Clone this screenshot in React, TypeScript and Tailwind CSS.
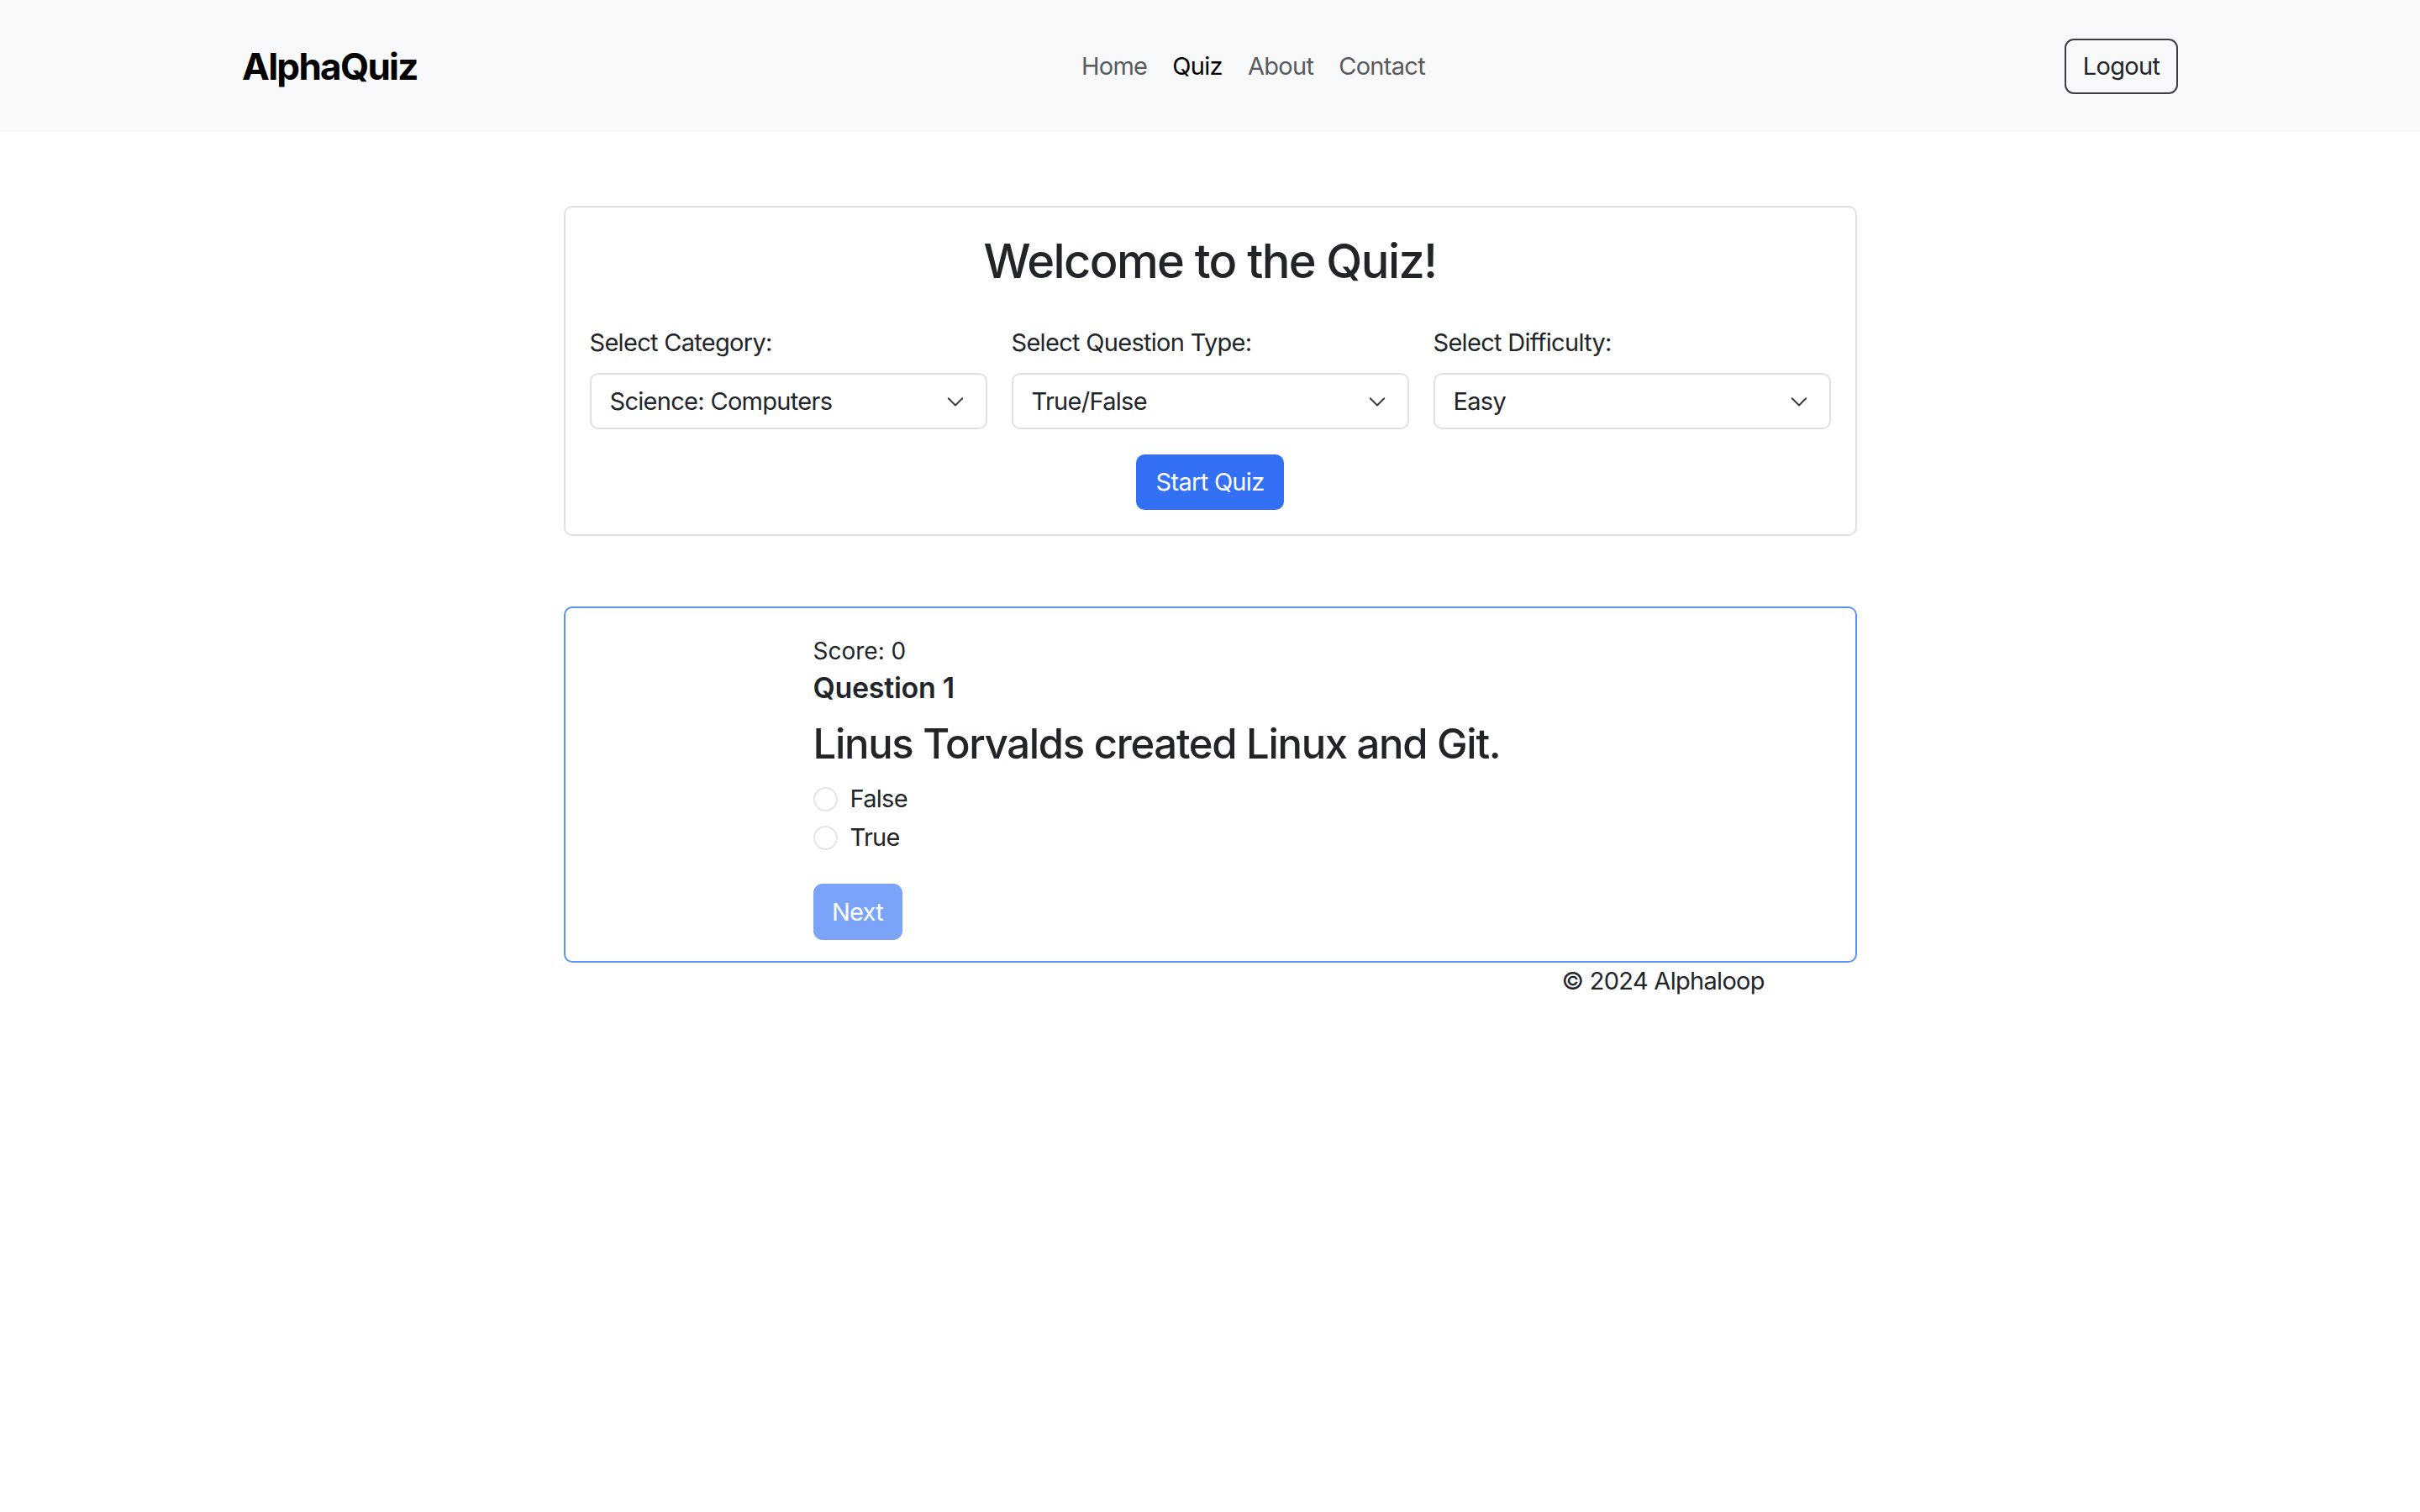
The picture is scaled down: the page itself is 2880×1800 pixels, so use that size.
import React, { useState } from 'react';

const font = "font-['Inter','Liberation_Sans',sans-serif]";

const Chevron = () => (
  <svg width="24" height="24" viewBox="0 0 16 16" fill="none" className="shrink-0">
    <path d="M2.5 5.5l5.5 5.5 5.5-5.5" stroke="#343a40" strokeWidth="1.3" strokeLinecap="round" strokeLinejoin="round" />
  </svg>
);

const FakeSelect: React.FC<{ label: string; value: string }> = ({ label, value }) => (
  <div className="flex flex-col">
    <label className="text-[29px] leading-[44px] tracking-[-0.7px] mb-[14px]">{label}</label>
    <div className="h-[67px] border-2 border-[#dee2e6] rounded-[10px] bg-white flex items-center justify-between pl-[22px] pr-[24px]">
      <span className="text-[29px] leading-[44px] tracking-[-0.7px]">{value}</span>
      <Chevron />
    </div>
  </div>
);

const App: React.FC = () => {
  const [answer, setAnswer] = useState<string | null>(null);
  const links = ['Home', 'Quiz', 'About', 'Contact'];

  return (
    <div className={`min-h-screen bg-white text-[#212529] ${font}`}>
      <nav className="h-[157px] bg-[#f8f9fa] flex items-center px-[288px]">
        <span className="text-[44px] font-bold text-black tracking-[-1.7px] mr-[29px]">AlphaQuiz</span>
        <ul className="mx-auto flex">
          {links.map(l => (
            <li key={l} className={`px-[15px] text-[29px] leading-[44px] tracking-[-0.7px] ${l === 'Quiz' ? 'text-black' : 'text-[#595a5b]'}`}>{l}</li>
          ))}
        </ul>
        <button className="h-[66px] w-[135px] border-2 border-[#3a3f44] rounded-[11px] text-[29px] tracking-[-0.7px] text-[#212529]">Logout</button>
      </nav>

      <main className="w-[1539px] mx-auto mt-[88px]">
        <section className="border-2 border-[#dfe2e5] rounded-[10px] px-[29px] pt-[29px] pb-[29px]">
          <h2 className="text-center text-[56px] font-medium leading-[70px] tracking-[-1.6px]">Welcome to the Quiz!</h2>
          <div className="grid grid-cols-3 gap-[29px] mt-[40px]">
            <FakeSelect label="Select Category:" value="Science: Computers" />
            <FakeSelect label="Select Question Type:" value="True/False" />
            <FakeSelect label="Select Difficulty:" value="Easy" />
          </div>
          <div className="flex justify-center mt-[30px]">
            <button className="h-[66px] w-[176px] rounded-[10px] bg-[#3370f4] text-white text-[29px] tracking-[-0.7px]">Start Quiz</button>
          </div>
        </section>

        <section className="mt-[84px] border-2 border-[#5c92f7] rounded-[10px] pl-[295px] pt-[31px] pb-[25px]">
          <p className="text-[28px] leading-[40px]">Score: 0</p>
          <h5 className="text-[34px] font-semibold leading-[41px] mt-[3px] tracking-[-0.3px]">Question 1</h5>
          <h3 className="text-[49px] font-medium leading-[60px] mt-[17px] tracking-[-1.3px]">Linus Torvalds created Linux and Git.</h3>
          <div className="mt-[12px]">
            {['False', 'True'].map(opt => (
              <label key={opt} className="h-[46px] flex items-center gap-[15px] cursor-pointer" onClick={() => setAnswer(opt)}>
                <span className={`w-[29px] h-[29px] rounded-full border-2 ${answer === opt ? 'border-[#3370f4] border-[9px]' : 'border-[#e3e5e8]'}`} />
                <span className="text-[29px] leading-[44px] tracking-[-0.7px]">{opt}</span>
              </label>
            ))}
          </div>
          <button disabled={!answer} className="mt-[32px] h-[67px] w-[106px] rounded-[11px] bg-[#7ba3f7] text-white text-[29px] tracking-[-0.7px]">Next</button>
        </section>

        <div className="pl-[1188px] text-[29px] leading-[44px] tracking-[-0.7px]">© 2024 Alphaloop</div>
      </main>
    </div>
  );
};

export default App;
